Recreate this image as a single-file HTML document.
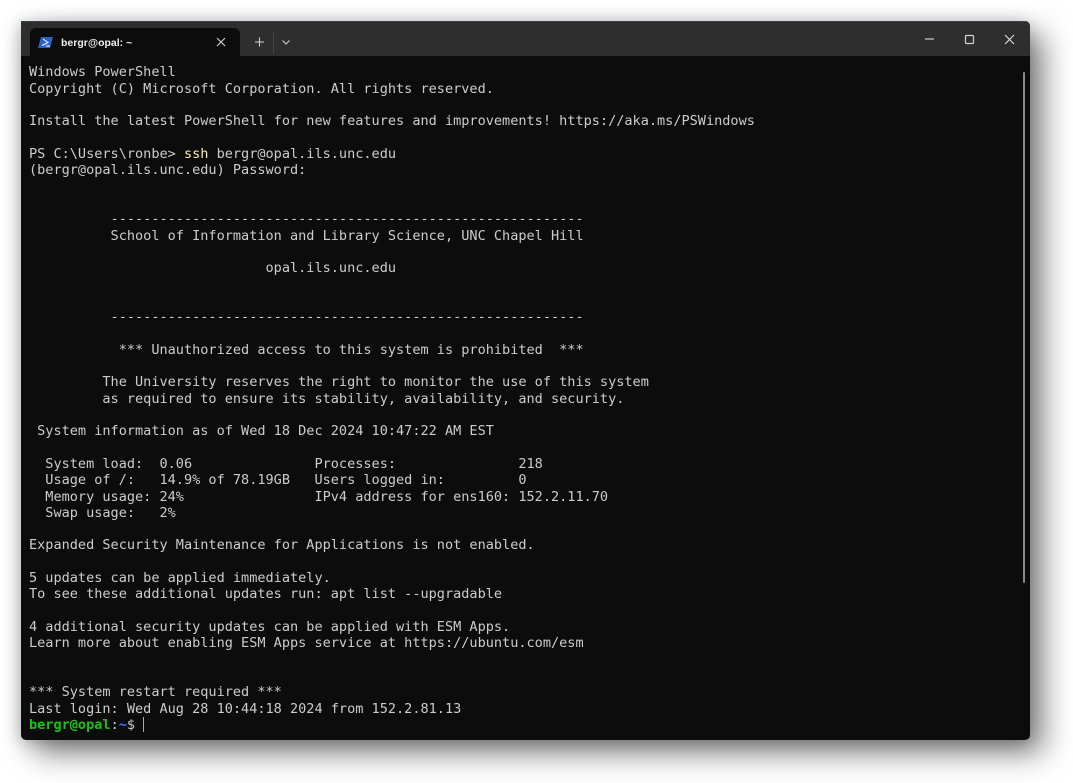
<!DOCTYPE html>
<html>
<head>
<meta charset="utf-8">
<style>
html,body{margin:0;padding:0;background:#fff;width:1073px;height:783px;overflow:hidden}
.win{position:absolute;left:21px;top:21px;width:1009px;height:719px;background:#0c0c0c;border-radius:0 5px 5px 5px;box-shadow:13px 13px 30px rgba(0,0,0,.5),-2px 2px 16px rgba(0,0,0,.22);overflow:hidden}
.bar{position:absolute;left:0;top:0;width:1009px;height:35px;background:#2e2e2e}
.edge{position:absolute;left:0;top:0;width:1009px;height:1px;background:#3b4050}
.tab{position:absolute;left:9px;top:7px;width:210px;height:28px;background:#0c0c0c;border-radius:6px 6px 0 0}
.title{position:absolute;left:40px;top:15px;font:600 10.5px/14px "Liberation Sans",sans-serif;color:#f0f0f0;white-space:pre;filter:blur(.25px)}
svg{position:absolute;left:0;top:0}
pre{position:absolute;left:8px;top:43.4px;margin:0;font-family:"DejaVu Sans Mono",monospace;font-size:13.55px;line-height:16.32px;color:#cccccc;letter-spacing:0;filter:blur(.3px)}
.y{color:#f9f1a5}.g{color:#16c60c;font-weight:bold}.b{color:#3b78ff;font-weight:bold}
.sb{position:absolute;left:1002px;top:51px;width:2px;height:511px;background:#8a8a8a;border-radius:1px}
.cur{position:absolute;left:122px;top:696px;width:1px;height:15px;background:#aaaaaa}
</style>
</head>
<body>
<div class="win">
<div class="bar"></div>
<div class="edge"></div>
<div class="tab"></div>
<svg width="1009" height="40" viewBox="0 0 1009 40">
<path d="M20 16h12l-3 11H17z" fill="#2a62c8"/>
<path d="M22 18l5 3.500-6 3M25 25h4" fill="none" stroke="#fff" stroke-width="1"/>
<path d="M196 17l8 8M204 17l-8 8" stroke="#d0d0d0" stroke-width="1.100" fill="none"/>
<path d="M234 21h9M238.500 16.500v9" stroke="#d0d0d0" stroke-width="1.100" fill="none"/>
<rect x="252" y="12" width="1" height="21" fill="#444"/>
<path d="M261.500 19.500l3.500 3.500 3.500-3.500" stroke="#d0d0d0" stroke-width="1.100" fill="none"/>
<path d="M904 18h9" stroke="#c8c8c8" stroke-width="1.300" fill="none"/>
<rect x="944.500" y="14.500" width="8" height="8" rx="1" stroke="#d0d0d0" stroke-width="1.200" fill="none"/>
<path d="M984 14l9 9M993 14l-9 9" stroke="#e0e0e0" stroke-width="1.100" fill="none"/>
</svg>
<div class="title">bergr@opal: ~</div>
<div class="sb"></div>
<div class="cur"></div>
<pre>Windows PowerShell
Copyright (C) Microsoft Corporation. All rights reserved.

Install the latest PowerShell for new features and improvements! https://aka.ms/PSWindows

PS C:\Users\ronbe&gt; <span class="y">ssh</span> bergr@opal.ils.unc.edu
(bergr@opal.ils.unc.edu) Password:


          ----------------------------------------------------------
          School of Information and Library Science, UNC Chapel Hill

                             opal.ils.unc.edu


          ----------------------------------------------------------

           *** Unauthorized access to this system is prohibited  ***

         The University reserves the right to monitor the use of this system
         as required to ensure its stability, availability, and security.

 System information as of Wed 18 Dec 2024 10:47:22 AM EST

  System load:  0.06               Processes:               218
  Usage of /:   14.9% of 78.19GB   Users logged in:         0
  Memory usage: 24%                IPv4 address for ens160: 152.2.11.70
  Swap usage:   2%

Expanded Security Maintenance for Applications is not enabled.

5 updates can be applied immediately.
To see these additional updates run: apt list --upgradable

4 additional security updates can be applied with ESM Apps.
Learn more about enabling ESM Apps service at https://ubuntu.com/esm


*** System restart required ***
Last login: Wed Aug 28 10:44:18 2024 from 152.2.81.13
<span class="g">bergr@opal</span>:<span class="b">~</span>$</pre>
</div>
</body>
</html>
